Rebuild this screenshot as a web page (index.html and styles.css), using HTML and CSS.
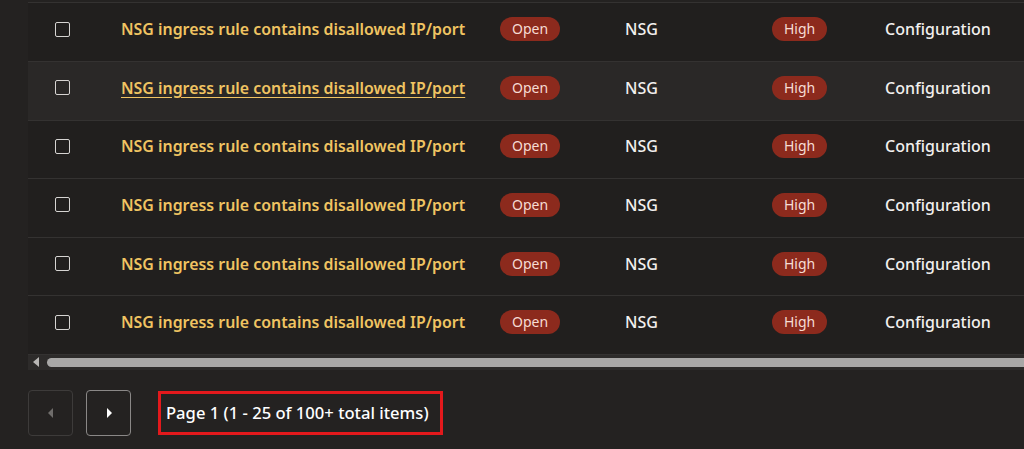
FILE: index.html
```html
<!DOCTYPE html>
<html lang="en">
<head>
    <meta charset="UTF-8">
    <title>Problems</title>
    <link rel="stylesheet" href="styles.css">
</head>
<body>
    <div class="table-wrap">
        <div class="problem-table">
            <div class="row">
                <div class="cell check"><span class="checkbox"></span></div>
                <div class="cell name"><a href="#">NSG ingress rule contains disallowed IP/port</a></div>
                <div class="cell"><span class="badge">Open</span></div>
                <div class="cell text">NSG</div>
                <div class="cell"><span class="badge">High</span></div>
                <div class="cell text">Configuration</div>
            </div>
            <div class="row hover">
                <div class="cell check"><span class="checkbox"></span></div>
                <div class="cell name"><a href="#">NSG ingress rule contains disallowed IP/port</a></div>
                <div class="cell"><span class="badge">Open</span></div>
                <div class="cell text">NSG</div>
                <div class="cell"><span class="badge">High</span></div>
                <div class="cell text">Configuration</div>
            </div>
            <div class="row">
                <div class="cell check"><span class="checkbox"></span></div>
                <div class="cell name"><a href="#">NSG ingress rule contains disallowed IP/port</a></div>
                <div class="cell"><span class="badge">Open</span></div>
                <div class="cell text">NSG</div>
                <div class="cell"><span class="badge">High</span></div>
                <div class="cell text">Configuration</div>
            </div>
            <div class="row">
                <div class="cell check"><span class="checkbox"></span></div>
                <div class="cell name"><a href="#">NSG ingress rule contains disallowed IP/port</a></div>
                <div class="cell"><span class="badge">Open</span></div>
                <div class="cell text">NSG</div>
                <div class="cell"><span class="badge">High</span></div>
                <div class="cell text">Configuration</div>
            </div>
            <div class="row">
                <div class="cell check"><span class="checkbox"></span></div>
                <div class="cell name"><a href="#">NSG ingress rule contains disallowed IP/port</a></div>
                <div class="cell"><span class="badge">Open</span></div>
                <div class="cell text">NSG</div>
                <div class="cell"><span class="badge">High</span></div>
                <div class="cell text">Configuration</div>
            </div>
            <div class="row">
                <div class="cell check"><span class="checkbox"></span></div>
                <div class="cell name"><a href="#">NSG ingress rule contains disallowed IP/port</a></div>
                <div class="cell"><span class="badge">Open</span></div>
                <div class="cell text">NSG</div>
                <div class="cell"><span class="badge">High</span></div>
                <div class="cell text">Configuration</div>
            </div>
        </div>
        <div class="scrollbar">
            <span class="scroll-arrow"></span>
            <span class="scroll-thumb"></span>
        </div>
    </div>

    <div class="pager">
        <button class="page-btn" disabled>
            <svg width="8" height="12" viewBox="0 0 8 12"><path d="M6 1 L1 6 L6 11 Z" fill="currentColor"/></svg>
        </button>
        <button class="page-btn">
            <svg width="8" height="12" viewBox="0 0 8 12"><path d="M2 1 L7 6 L2 11 Z" fill="currentColor"/></svg>
        </button>
        <div class="page-info">Page 1 (1 - 25 of 100+ total items)</div>
    </div>
</body>
</html>
```

FILE: styles.css
```css
body {
    margin: 0;
    background-color: #242221;
    font-family: 'Noto Sans', 'Open Sans', Arial, sans-serif;
    color: #f2f0ee;
    overflow: hidden;
}
.table-wrap {
    margin-left: 28px;
    padding-top: 2.4px;
}
.problem-table {
    background-color: #211f1e;
}
.row {
    display: grid;
    grid-template-columns: 93px 379px 125px 147px 113px 1fr;
    height: 57.6px;
    border-top: 1px solid #343231;
}
.row.hover {
    background-color: #2a2827;
}
.cell {
    display: flex;
    align-items: center;
    font-size: 16px;
}
.check {
    padding-left: 27px;
}
.checkbox {
    width: 13px;
    height: 13px;
    border: 1.5px solid #d6d4d2;
    border-radius: 2px;
    margin-top: -6px;
}
.name a {
    color: #f0c462;
    font-weight: 600;
    font-size: 15.9px;
    text-decoration: none;
    margin-top: -6px;
}
.row.hover .name a {
    text-decoration: underline;
    text-underline-offset: 3px;
}
.text {
    font-weight: 500;
    margin-top: -6px;
}
.badge {
    background-color: #8c2a1d;
    color: #f6dcd4;
    font-size: 14px;
    border-radius: 12px;
    padding: 0 12px;
    height: 24px;
    line-height: 24px;
    margin-top: -6px;
}
.scrollbar {
    display: flex;
    align-items: center;
    height: 15px;
    background-color: #2d2b2a;
    border-top: 1px solid #343231;
}
.scroll-arrow {
    width: 0;
    height: 0;
    border-top: 5px solid transparent;
    border-bottom: 5px solid transparent;
    border-right: 6px solid #b9b7b5;
    margin: 0 8px 0 5px;
}
.scroll-thumb {
    flex: 1;
    height: 9px;
    background-color: #a9a8a7;
    border-radius: 5px 0 0 5px;
}
.pager {
    display: flex;
    align-items: center;
    gap: 13px;
    margin: 20px 0 0 28px;
}
.page-btn {
    width: 45px;
    height: 46px;
    background-color: transparent;
    border: 1px solid #8a8887;
    border-radius: 4px;
    color: #ffffff;
    display: flex;
    align-items: center;
    justify-content: center;
    padding: 0;
}
.page-btn:disabled {
    border-color: #3d3b3a;
    color: #6f6d6b;
}
.page-info {
    margin-left: 14px;
    border: 3px solid #e3191c;
    height: 38px;
    width: 274px;
    box-sizing: content-box;
    padding-left: 5px;
    display: flex;
    align-items: center;
    font-size: 16.6px;
    font-weight: 500;
    color: #ffffff;
}
```
